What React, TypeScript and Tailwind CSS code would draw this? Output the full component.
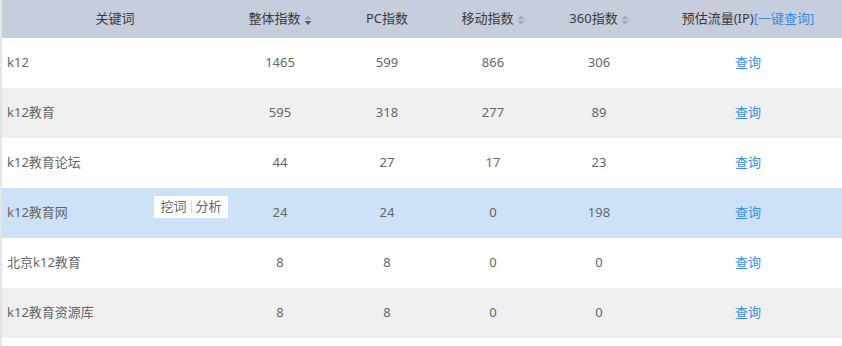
import React from "react";

type Row = { kw: string; a: string; b: string; c: string; d: string; bg: string; tip?: boolean };

const rows: Row[] = [
  { kw: "k12", a: "1465", b: "599", c: "866", d: "306", bg: "bg-white" },
  { kw: "k12教育", a: "595", b: "318", c: "277", d: "89", bg: "bg-[#f0f0f0]" },
  { kw: "k12教育论坛", a: "44", b: "27", c: "17", d: "23", bg: "bg-white" },
  { kw: "k12教育网", a: "24", b: "24", c: "0", d: "198", bg: "bg-[#cde2f7]", tip: true },
  { kw: "北京k12教育", a: "8", b: "8", c: "0", d: "0", bg: "bg-white" },
  { kw: "k12教育资源库", a: "8", b: "8", c: "0", d: "0", bg: "bg-[#f0f0f0]" },
];

const cols = "grid grid-cols-[226px_104px_110px_102px_110px_188px]";

function Sort({ active }: { active?: boolean }) {
  return (
    <svg width="8" height="11" viewBox="0 0 8 11" className="ml-[3px] mt-[2px]">
      <path d="M4 0.5 L7.5 4.5 L0.5 4.5 Z" fill={active ? "#9aa0ab" : "#a4aab6"} />
      <path d="M0.5 6 L7.5 6 L4 10 Z" fill={active ? "#555a63" : "#a4aab6"} />
    </svg>
  );
}

export default function App() {
  return (
    <div
      className="w-[842px] h-[346px] bg-white border-l-2 border-[#e6e6e6] text-[13px]"
      style={{ fontFamily: '"Noto Sans", "Noto Sans CJK SC", sans-serif' }}
    >
      <div className={`${cols} h-[38px] bg-[#c6cddd] text-[#3a3a3a]`}>
        <div className="flex items-center justify-center">关键词</div>
        <div className="flex items-center justify-center">整体指数<Sort active /></div>
        <div className="flex items-center justify-center">PC指数</div>
        <div className="flex items-center justify-center">移动指数<Sort /></div>
        <div className="flex items-center justify-center">360指数<Sort /></div>
        <div className="flex items-center justify-center">
          预估流量(IP)<span className="text-[#3b8ee8]">[一键查询]</span>
        </div>
      </div>
      {rows.map((r) => (
        <div key={r.kw} className={`${cols} h-[50px] ${r.bg} text-[#666]`}>
          <div className="relative flex items-center pl-[5px]">
            {r.kw}
            {r.tip && (
              <div className="absolute left-[152px] top-[8px] h-[22px] w-[74px] bg-white flex items-center justify-center text-[#666]">
                挖词<span className="mx-[4px] w-[1px] h-[14px] bg-[#d4dcea]" />分析
              </div>
            )}
          </div>
          <div className="flex items-center justify-center">{r.a}</div>
          <div className="flex items-center justify-center">{r.b}</div>
          <div className="flex items-center justify-center">{r.c}</div>
          <div className="flex items-center justify-center">{r.d}</div>
          <div className="flex items-center justify-center text-[#3b8ee8]">查询</div>
        </div>
      ))}
    </div>
  );
}
